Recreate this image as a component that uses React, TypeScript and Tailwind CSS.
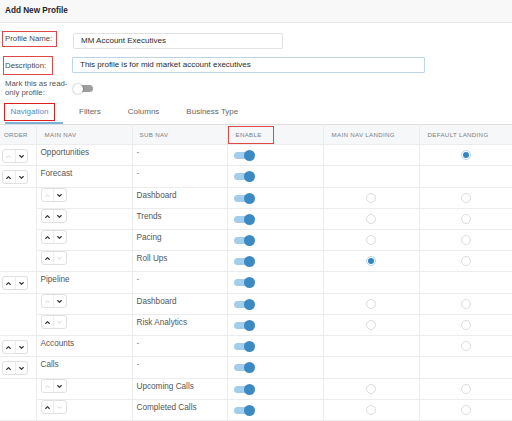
import React from 'react'

type Mark = 'none' | 'off' | 'on'

type Row = {
  sub: boolean
  main?: string
  subNav: string
  up: boolean
  down: boolean
  mainLanding: Mark
  defLanding: Mark
  h: string
  lastSub?: boolean
}

const ROWS: Row[] = [
  { sub: false, main: 'Opportunities', subNav: '-', up: false, down: true, mainLanding: 'none', defLanding: 'on', h: 'h-[21px]' },
  { sub: false, main: 'Forecast', subNav: '-', up: true, down: true, mainLanding: 'none', defLanding: 'none', h: 'h-[22px]' },
  { sub: true, subNav: 'Dashboard', up: false, down: true, mainLanding: 'off', defLanding: 'off', h: 'h-[21px]' },
  { sub: true, subNav: 'Trends', up: true, down: true, mainLanding: 'off', defLanding: 'off', h: 'h-[21px]' },
  { sub: true, subNav: 'Pacing', up: true, down: true, mainLanding: 'off', defLanding: 'off', h: 'h-[21px]' },
  { sub: true, subNav: 'Roll Ups', up: true, down: false, mainLanding: 'on', defLanding: 'off', h: 'h-[21px]', lastSub: true },
  { sub: false, main: 'Pipeline', subNav: '-', up: true, down: true, mainLanding: 'none', defLanding: 'none', h: 'h-[22px]' },
  { sub: true, subNav: 'Dashboard', up: false, down: true, mainLanding: 'off', defLanding: 'off', h: 'h-[21px]' },
  { sub: true, subNav: 'Risk Analytics', up: true, down: false, mainLanding: 'off', defLanding: 'off', h: 'h-[21px]', lastSub: true },
  { sub: false, main: 'Accounts', subNav: '-', up: true, down: true, mainLanding: 'none', defLanding: 'off', h: 'h-[21px]' },
  { sub: false, main: 'Calls', subNav: '-', up: true, down: true, mainLanding: 'none', defLanding: 'none', h: 'h-[22px]' },
  { sub: true, subNav: 'Upcoming Calls', up: false, down: true, mainLanding: 'off', defLanding: 'off', h: 'h-[21px]' },
  { sub: true, subNav: 'Completed Calls', up: true, down: false, mainLanding: 'off', defLanding: 'off', h: 'h-[21px]', lastSub: true },
]

function Chevron({ dir, active }: { dir: 'up' | 'down'; active: boolean }) {
  return (
    <svg width="5" height="3" viewBox="0 0 5 3" fill="none">
      <polyline
        points={dir === 'up' ? '0.7,2.5 2.5,0.7 4.3,2.5' : '0.7,0.5 2.5,2.3 4.3,0.5'}
        stroke={active ? '#333' : '#c8c8c8'}
        strokeWidth={active ? 1.1 : 0.8}
        strokeLinecap="round"
        strokeLinejoin="round"
      />
    </svg>
  )
}

function OrderButtons({ up, down }: { up: boolean; down: boolean }) {
  return (
    <div className="flex h-[14px] w-[26px] rounded-[3px] border border-[#e0e0e0] bg-white">
      <div className="flex flex-1 items-center justify-center border-r border-[#ececec]">
        <Chevron dir="up" active={up} />
      </div>
      <div className="flex flex-1 items-center justify-center">
        <Chevron dir="down" active={down} />
      </div>
    </div>
  )
}

function Toggle() {
  return (
    <div className="relative h-[11px] w-[21px]">
      <div className="absolute left-0 top-[2px] h-[7px] w-[18px] rounded-full bg-[#a3cdec]" />
      <div className="absolute right-0 top-0 h-[11px] w-[11px] rounded-full bg-[#3b8ac4]" />
    </div>
  )
}

function Radio({ mark }: { mark: Mark }) {
  if (mark === 'none') return null
  if (mark === 'on')
    return (
      <div className="flex h-[10px] w-[10px] items-center justify-center rounded-full border border-[#b9d6ec] bg-white">
        <div className="h-[6px] w-[6px] rounded-full bg-[#2f86c6]" />
      </div>
    )
  return <div className="h-[10px] w-[10px] rounded-full border border-[#dcdcdc] bg-white" />
}

export default function App() {
  const cell = 'border-r border-b border-[#ececec] align-top p-0'
  return (
    <div className="h-[421px] w-[512px] overflow-hidden bg-white font-['Liberation_Sans',Arial,sans-serif] text-[#4a4a4a]">
      {/* Title bar */}
      <div className="flex h-[23px] items-center border-b border-[#e6e6e6] bg-[#f8f8f9] px-[5px]">
        <span className="text-[8.2px] font-bold text-[#1f1f1f]">Add New Profile</span>
      </div>

      {/* Form */}
      <div className="mt-[8px] flex items-start">
        <div className="ml-[2px] flex h-[16px] w-[55px] items-center border border-[#e04848] pl-[2px] text-[7.8px]">
          Profile Name:
        </div>
        <div className="ml-[16px] mt-[2px] flex h-[16px] w-[210px] items-center rounded-[2px] border border-[#e2e2e2] pl-[7px] text-[8px] text-[#2a2a2a]">
          MM Account Executives
        </div>
      </div>
      <div className="mt-[7px] flex items-start">
        <div className="ml-[3px] flex h-[19px] w-[50px] items-center border border-[#e04848] pl-[1px] text-[7.8px]">
          Description:
        </div>
        <div className="ml-[19px] mt-[1px] flex h-[16px] w-[353px] items-center rounded-[1px] border border-[#bcd5e8] pl-[7px] text-[8px] text-[#2a2a2a]">
          This profile is for mid market account executives
        </div>
      </div>
      <div className="mt-[5px] flex items-center">
        <div className="ml-[5px] w-[64px] text-[7.8px] leading-[8.5px] text-[#555]">
          Mark this as read-only profile:
        </div>
        <div className="relative ml-[4px] h-[10px] w-[20px]">
          <div className="absolute right-0 top-[1.5px] h-[7px] w-[15px] rounded-full bg-[#9e9e9e]" />
          <div className="absolute left-0 top-0 h-[10px] w-[10px] rounded-full bg-white shadow-[0_0_2px_rgba(0,0,0,0.45)]" />
        </div>
      </div>

      {/* Tabs */}
      <div className="mt-[6px] flex h-[21px] items-start text-[8px] text-[#666]">
        <div className="ml-[5px] flex w-[58px] flex-col">
          <div className="-ml-[1px] flex h-[18px] w-[51px] items-center justify-center border border-[#e01e1e] text-[#4a90c8]">
            Navigation
          </div>
          <div className="mt-[1px] h-[2px] w-[58px] bg-[#7fb0d8]" />
        </div>
        <div className="ml-[16px] flex h-[18px] items-center">Filters</div>
        <div className="ml-[27px] flex h-[18px] items-center">Columns</div>
        <div className="ml-[27px] flex h-[18px] items-center">Business Type</div>
      </div>

      {/* Table */}
      <table className="w-[512px] table-fixed border-collapse">
        <colgroup>
          <col className="w-[36px]" />
          <col className="w-[96px]" />
          <col className="w-[95px]" />
          <col className="w-[96px]" />
          <col className="w-[96px]" />
          <col className="w-[93px]" />
        </colgroup>
        <thead>
          <tr className="h-[20px] border-t border-[#dedede] bg-[#f6f7f8] text-left text-[6.2px] tracking-[0.3px] text-[#808080]">
            <th className="border-r border-b border-[#ececec] pl-[4px] font-normal">ORDER</th>
            <th className="border-r border-b border-[#ececec] pl-[8px] font-normal">MAIN NAV</th>
            <th className="border-r border-b border-[#ececec] pl-[7px] font-normal">SUB NAV</th>
            <th className="border-r border-b border-[#ececec] p-0 font-normal">
              <div className="flex h-[18px] w-[46px] items-center border border-[#e04848] pl-[7px]">ENABLE</div>
            </th>
            <th className="border-r border-b border-[#ececec] pl-[8px] font-normal">MAIN NAV LANDING</th>
            <th className="border-b border-[#ececec] pl-[8px] font-normal">DEFAULT LANDING</th>
          </tr>
        </thead>
        <tbody className="text-[8.2px] text-[#555]">
          {ROWS.map((r, i) => (
            <tr key={i} className={r.h}>
              <td className={r.sub ? `border-r border-[#ececec] p-0 ${r.lastSub ? 'border-b' : ''}` : cell}>
                {!r.sub && (
                  <div className="pl-[2px] pt-[4px]">
                    <OrderButtons up={r.up} down={r.down} />
                  </div>
                )}
              </td>
              <td className={cell}>
                {r.sub ? (
                  <div className="flex h-full items-center pl-[4px]">
                    <OrderButtons up={r.up} down={r.down} />
                  </div>
                ) : (
                  <div className="pl-[4px] pt-[2px]">{r.main}</div>
                )}
              </td>
              <td className={cell}>
                <div className={`pl-[4px] pt-[2px] ${r.subNav === '-' ? 'text-[#888]' : ''}`}>{r.subNav}</div>
              </td>
              <td className="border-r border-b border-[#ececec] p-0 align-middle">
                <div className="pl-[6px]">
                  <Toggle />
                </div>
              </td>
              <td className="border-r border-b border-[#ececec] p-0 align-middle">
                <div className="flex justify-center">
                  <Radio mark={r.mainLanding} />
                </div>
              </td>
              <td className="border-b border-[#ececec] p-0 align-middle">
                <div className="flex justify-center">
                  <Radio mark={r.defLanding} />
                </div>
              </td>
            </tr>
          ))}
        </tbody>
      </table>
    </div>
  )
}
